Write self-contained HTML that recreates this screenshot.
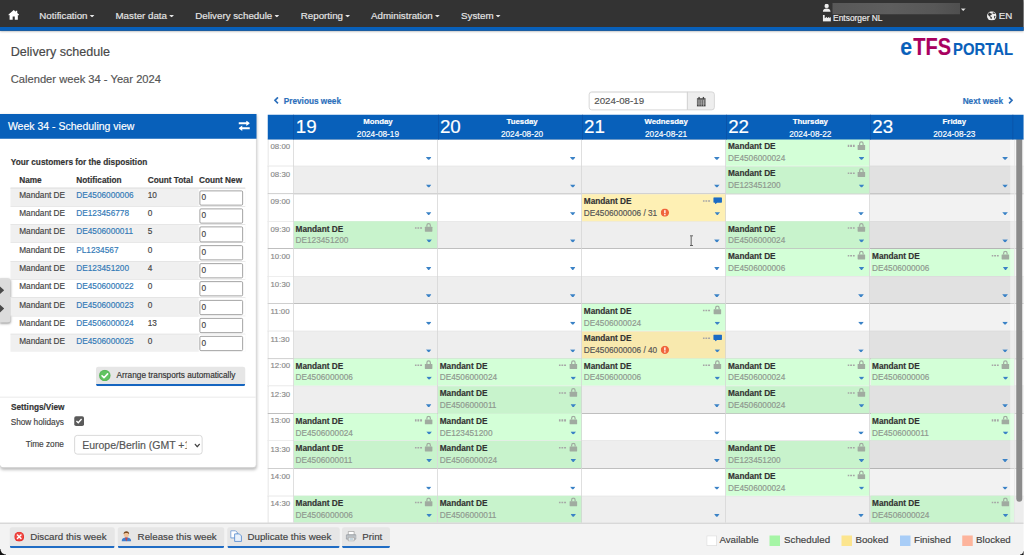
<!DOCTYPE html>
<html lang="en"><head><meta charset="utf-8"><title>Delivery schedule</title>
<style>
html,body{margin:0;padding:0;background:#fff;overflow:hidden;width:1024px;height:555px}
body{font-family:"Liberation Sans",sans-serif;font-size:11px;color:#444}
#s{position:absolute;left:0;top:0;width:1365.33px;height:740px;transform:scale(.75);transform-origin:0 0;overflow:hidden;background:#fff}
#s *{box-sizing:border-box;-webkit-text-stroke:.22px}
.abs{position:absolute}
/* navbar */
#nav{position:absolute;left:0;top:0;width:100%;height:41px;background:#333;border-bottom:5px solid #0860ba;box-shadow:0 1px 3px rgba(0,0,0,.35);z-index:9}
#nav .it{position:absolute;top:6px;line-height:30px;font-size:13px;color:#e6e6e6;white-space:nowrap}
#nav .car{display:inline-block;width:7px;height:3.7px;background:#e6e6e6;clip-path:polygon(0 0,100% 0,50% 100%);margin-left:2.6px;vertical-align:middle;position:relative;top:0px}
#nav svg{position:absolute}
#redact{position:absolute;left:1110.4px;top:4.1px;width:169.6px;height:15.4px;background:linear-gradient(90deg,#585858 0,#5e5e5e 45%,#575757 80%,#4f4f4f 100%)}
/* headings */
#h1{position:absolute;left:14.3px;top:57.6px;font-size:16.8px;line-height:24px;color:#484848;white-space:nowrap}
#h2{position:absolute;left:14.3px;top:94px;font-size:14.9px;line-height:22px;color:#555;white-space:nowrap}
#logo{position:absolute;right:14.6px;top:40px;height:44px;white-space:nowrap;font-weight:bold;transform-origin:100% 50%;transform:scaleX(.86);line-height:44px}
#logo .e{color:#0860ba;font-size:33px}
#logo .t{color:#a8005f;font-size:31px;letter-spacing:.1px;margin-left:1.6px}
#logo .p{color:#0860ba;font-size:23px;margin-left:3px}
/* left panel */
#lp{position:absolute;left:0;top:152px;width:341.7px;height:471.7px;background:#fff;border-right:1px solid #ddd;border-bottom:1px solid #ccc;border-radius:0 0 5px 5px;box-shadow:0 2px 4px rgba(0,0,0,.25)}
#lph{position:absolute;left:0;top:0;width:341.7px;height:33.3px;background:#0860ba;color:#fff;font-size:14px;line-height:33px;padding-left:10.5px;white-space:nowrap}
.b11{position:absolute;font-weight:bold;font-size:11px;line-height:14px;color:#333;white-space:nowrap}
.t11{position:absolute;font-size:11px;line-height:14px;color:#444;white-space:nowrap}
#ctab .tr{position:absolute;left:13.7px;width:313px;height:24.32px;border-top:1px solid #e2e2e2;font-size:11px;line-height:14px;color:#444}
#ctab .tr.a{background:#f0f0f0}
#ctab .tr span,#ctab .tr a{position:absolute;top:1.3px;white-space:nowrap}
#ctab .c1{left:11.9px}
#ctab .c2{left:88px;color:#337ab7}
#ctab .c3{left:183.3px}
#ctab .tr .inp{left:252.3px;top:2.2px;width:57.7px;height:20.2px;border:1px solid #858585;border-radius:2px;background:#fff;padding:1.2px 0 0 1.8px;font-size:11px;line-height:14px;color:#444}
#ctab .tr:after{content:"";position:absolute;left:251px;top:0;right:0;bottom:0;background:#fff;z-index:0}
#ctab .tr .inp{z-index:1}
.btn{position:absolute;background:#e6e6e6;border-bottom:3px solid #1565c0;border-radius:3px;color:#444;white-space:nowrap}
#tog{position:absolute;left:0;top:370.7px;width:14.4px;height:59px;background:#dcdcdc;border-radius:0 4px 4px 0;box-shadow:0 1px 3px rgba(0,0,0,.35);overflow:hidden}
/* toolbar */
.lnk{position:absolute;font-weight:bold;font-size:11px;line-height:14px;color:#2c6fbb;white-space:nowrap}
#din{position:absolute;left:784.8px;top:121.7px;width:132.5px;height:25.6px;border:1px solid #ccc;border-radius:4px 0 0 4px;background:#fff;font-size:13px;line-height:23px;padding-left:6.5px;color:#555;box-shadow:inset 0 1px 1px rgba(0,0,0,.075)}
#dad{position:absolute;left:916.3px;top:121.7px;width:37px;height:25.6px;border:1px solid #ccc;border-radius:0 4px 4px 0;background:#eee}
/* calendar */
#cal{position:absolute;left:0;top:0;width:1365.33px;height:697.2px;overflow:hidden;pointer-events:none}
.chead{position:absolute;left:357px;top:152.8px;width:1010px;height:33px;background:#0860ba;z-index:3}
.dh{position:absolute;top:152.8px;height:33px;color:#fff;border-left:1px solid #0a50a4;z-index:4;overflow:hidden}
.dh .dn{position:absolute;left:2.1px;top:0.6px;font-size:25px;line-height:30px}
.dh .dd{position:absolute;left:32px;right:0;top:-0.2px;text-align:center;font-size:11px;line-height:17.2px}
.dh .dd b{font-size:10.45px}
.row{position:absolute;left:357px;width:1010px;height:36.6px}
.row.r0{background:#fff;border-top:1px solid #aaa}
.row.r1{background:#eee;border-top:1px solid #e6e6e6}
.row .tm{position:absolute;left:0;top:0;width:34.5px;height:36.6px;font-size:10.45px;line-height:14px;color:#8a8a8a;padding:2.6px 0 0 2.7px;background:#fff;border-left:1px solid #ddd}
.row.r1 .tm{background:#fff;border-top:1px solid #e8e8e8;top:-1px;height:37.6px;padding-top:3.6px}
.dim{position:absolute;top:184.8px;height:513px;background:rgba(0,0,0,.05)}
.vl{position:absolute;top:184.8px;width:1px;height:512px;background:#d4d4d4}
.ev{position:absolute;height:36.1px;font-size:11px;line-height:14px;color:#333;padding:2.6px 0 0 2.2px;white-space:nowrap}
.ev.g{background:#d3ffd7}
.ev.g.o{background:#c8f3cc}
.ev.y{background:#fef0b4}
.ev.y.o{background:#f8e9ae}
.ev b{display:block;color:#333}
.ev .nm{display:block;color:#8f988f;margin-top:1.8px}
.ev.y .nm{color:#555}
.ev .ex{position:absolute;width:11px;height:11px;margin-left:4.5px;margin-top:1.5px}
.ev .dots{position:absolute;right:20.3px;top:8.1px;width:10px;height:2.2px;background:radial-gradient(circle at 1.1px 1.1px,#a6a6a6 1.1px,transparent 1.4px);background-size:3.6px 2.2px}
.ev .lk{position:absolute;right:6px;top:2.4px;width:11px;height:12.6px}
.ev .cm{position:absolute;right:5.2px;top:4.2px;width:11.6px;height:9.8px}
.ct{position:absolute;width:7.6px;height:4.2px;background:#3a82c6;clip-path:polygon(0 0,100% 0,58% 100%,42% 100%)}
.ev .ct{right:7.5px;top:24px}
.sb{position:absolute;left:1347px;top:184.8px;width:19px;height:513px;background:rgba(255,255,255,.4)}
.sb .th{position:absolute;left:8.2px;top:0;width:7.8px;height:484px;background:#8b8b8b;border-radius:0 0 4px 4px}
.ibeam{position:absolute;left:919.5px;top:314px;width:4px;height:14px;border-top:1.4px solid #333;border-bottom:1.4px solid #333}
.ibeam:after{content:"";position:absolute;left:1.3px;top:0;width:1.4px;height:100%;background:#333}
/* footer */
#ft{position:absolute;left:0;top:697.2px;width:100%;height:43px;background:#f3f3f3;border-top:1px solid #bdbdbd}
#ft .btn{top:4.4px;height:28.7px;font-size:13px;line-height:25px;border-bottom-color:#1f6cc4}
#ft .btn span{position:absolute;top:0}
#ft .btn svg{position:absolute}
.lg{position:absolute;top:15.8px;width:14px;height:14px}
.lt{position:absolute;top:12px;font-size:13px;line-height:20px;color:#444;white-space:nowrap}

.cbl{position:absolute;left:0;bottom:0;width:8px;height:8px;background:radial-gradient(circle at 100% 0,transparent 6.6px,#111 8px);z-index:20}
.cbr{position:absolute;right:0;bottom:0;width:5px;height:5px;background:radial-gradient(circle at 0 0,transparent 3.6px,#111 5px);z-index:20}

</style></head><body>
<div id="s">
<div id="nav">
<svg style="left:11px;top:13.3px;width:14.6px;height:13.4px" viewBox="0 0 14.6 13.4"><path d="M7.3 0.2 0 6.6l.9 1 .9-.8v6.4h4.1V9h2.8v4.2h4.1V6.8l.9.8.9-1L12 4.400V1.200h-1.900v1.500z" fill="#fff"/></svg>
<span class="it" style="left:52.4px">Notification<i class="car"></i></span>
<span class="it" style="left:154px">Master data<i class="car"></i></span>
<span class="it" style="left:260.4px">Delivery schedule<i class="car"></i></span>
<span class="it" style="left:401px">Reporting<i class="car"></i></span>
<span class="it" style="left:494.7px">Administration<i class="car"></i></span>
<span class="it" style="left:614.7px">System<i class="car"></i></span>
<svg style="left:1097.3px;top:5.3px;width:10.4px;height:10.8px" viewBox="0 0 10.4 10.8"><circle cx="5.2" cy="2.9" r="2.9" fill="#eee"/><path d="M0 10.800c0-3.200 2.200-4.600 5.200-4.600s5.200 1.400 5.200 4.600z" fill="#eee"/></svg>
<div id="redact"></div>
<i class="car" style="position:absolute;left:1280.8px;top:11px;margin:0"></i>
<svg style="left:1097.3px;top:20.4px;width:10.8px;height:8.8px" viewBox="0 0 10.8 8.8"><path d="M0 0h2.600v4.400L5.600 2.200v2.200L8.600 2.200v2.200L10.800 2.800V8.800H0z" fill="#eee"/></svg>
<span class="it" style="left:1110.8px;top:17.2px;font-size:11.2px;line-height:14px;color:#eee">Entsorger NL</span>
<svg style="left:1316px;top:14.7px;width:12.6px;height:12.6px" viewBox="0 0 12.6 12.6"><circle cx="6.3" cy="6.3" r="6.3" fill="#eee"/><path d="M3.200 1.600c1 .3 1.200 1.200 2.300 1.300 1 .1 1.500.7 1 1.500-.6.800-1.800.6-2.200 1.500-.3.900.9 1.300 1.700 1.700.8.400.5 1.500.1 2.300-.4.800-1.200.3-1.500-.6-.3-.9-.1-1.600-.9-2.200C2.900 6.500 1.800 5.900 1.400 4.800 1.300 3.500 2.100 2.200 3.200 1.600zM8.600 1.200c.9.500 1.800 1.300 2.300 2.300-.7.300-1.100-.2-1.700-.3-.7-.1-1 .5-1.600.1-.5-.4 0-1.100.3-1.500.2-.3.400-.5.700-.6zM10.300 6c.5.200.9.600 1 1.100-.3 1.200-1 2.200-1.900 2.900-.3-.7.300-1.300.1-2.100-.2-.7.200-1.700.8-1.900z" fill="#333"/></svg>
<span class="it" style="left:1331.6px">EN</span>
</div>
<div id="h1">Delivery schedule</div>
<div id="h2">Calender week 34 - Year 2024</div>
<div id="logo"><span class="e">e</span><span class="t">TFS</span><span class="p">PORTAL</span></div>

<div id="lp">
<div id="lph">Week 34 - Scheduling view
<svg class="abs" style="left:318px;top:9.2px;width:15.4px;height:13.4px" viewBox="0 0 15.4 13.4"><path d="M0 2.100h10.400V-.3l5 3.600-5 3.600V4.700H0zM15.400 8.800H5V6.400L0 10l5 3.600v-2.200h10.400z" fill="#fff"/></svg>
</div>
</div>
<div class="b11" style="left:14.4px;top:209px">Your customers for the disposition</div>
<div class="b11" style="left:25.6px;top:233.2px">Name</div>
<div class="b11" style="left:101.7px;top:233.2px">Notification</div>
<div class="b11" style="left:197px;top:233.2px">Count Total</div>
<div class="b11" style="left:265.3px;top:233.2px">Count New</div>
<div class="abs" style="left:13.7px;top:249.6px;width:313px;height:1.5px;background:#ddd"></div>
<div id="tog"><svg class="abs" style="left:0;top:0;width:14.4px;height:59px" viewBox="0 0 14.4 59"><path d="M-1 10L5.6 16L-1 22L-3.8 19.3L-.2 16L-3.8 12.7ZM-1 34.5L5.6 40.5L-1 46.5L-3.8 43.8L-.2 40.5L-3.8 37.2Z" fill="#4a4a4a"/></svg></div>

<div class="btn" style="left:127.7px;top:489.3px;width:199.3px;height:25.7px;font-size:11px;line-height:23px;color:#333">
<svg class="abs" style="left:4.7px;top:3.8px;width:15.4px;height:15.4px" viewBox="0 0 16 16"><circle cx="8" cy="8" r="8" fill="#5cb85c"/><circle cx="8" cy="8" r="6.300" fill="#62c462"/><path d="M4.200 8.300 6.900 11l5-5.300" fill="none" stroke="#fff" stroke-width="2.200" stroke-linecap="round" stroke-linejoin="round"/></svg>
<span class="abs" style="left:27.8px;top:0">Arrange transports automatically</span></div>
<div class="abs" style="left:0;top:529.2px;width:341px;height:1px;background:#e3e3e3"></div>
<div class="b11" style="left:14.7px;top:535.9px">Settings/View</div>
<div class="t11" style="left:0;width:85.2px;text-align:right;top:555.2px">Show holidays</div>
<div class="abs" style="left:99px;top:555px;width:12.6px;height:12.6px;background:#5a5a5a;border-radius:2.4px"><svg class="abs" style="left:0;top:0;width:12.6px;height:12.6px" viewBox="0 0 13 13"><path d="M3 6.600 5.500 9l4.600-5.200" fill="none" stroke="#fff" stroke-width="1.900"/></svg></div>
<div class="t11" style="left:0;width:85.2px;text-align:right;top:585.1px">Time zone</div>
<div class="abs" style="left:99px;top:580.4px;width:171px;height:25.8px;border:1px solid #ccc;border-radius:4px;background:#fff;font-size:14px;line-height:24px;padding-left:9.6px;color:#555;white-space:nowrap;overflow:hidden"><span style="display:inline-block;width:139px;overflow:hidden;height:24px">Europe/Berlin (GMT +1)</span>
<svg class="abs" style="left:158.6px;top:9.4px;width:8px;height:6px" viewBox="0 0 8 6"><path d="M.7.9 4 4.600 7.300.9" fill="none" stroke="#444" stroke-width="1.700"/></svg></div>

<svg class="abs" style="left:365.4px;top:129.3px;width:7px;height:9.6px" viewBox="0 0 7 9.600"><path d="M5.600.8 1.600 4.800l4 4" fill="none" stroke="#2c6fbb" stroke-width="2.200"/></svg>
<div class="lnk" style="left:378.3px;top:127.7px">Previous week</div>
<div id="din">2024-08-19</div>
<div id="dad"><svg class="abs" style="left:12px;top:6.200px;width:12px;height:13.2px" viewBox="0 0 12 13.200"><path d="M0 2h12v11.200H0z" fill="#444"/><path d="M2.200 0h1.800v3H2.200zM8 0h1.800v3H8z" fill="#444"/><path d="M0 4.400h12M0 7h12M0 9.600h12" stroke="#eee" stroke-width=".7"/><path d="M3 4.400v8.800M6 4.400v8.800M9 4.400v8.800" stroke="#eee" stroke-width=".6"/></svg></div>
<div class="lnk" style="left:1283.5px;top:127.5px">Next week</div>
<svg class="abs" style="left:1344.2px;top:129px;width:7px;height:9.6px" viewBox="0 0 7 9.600"><path d="M1.400.8 5.400 4.800l-4 4" fill="none" stroke="#2c6fbb" stroke-width="2.200"/></svg>
<div id="cal">
<div class="chead"></div>
<div class="dh" style="left:391.3px;width:192.2px"><span class="dn">19</span><span class="dd"><b>Monday</b><br>2024-08-19</span></div>
<div class="dh" style="left:583.5px;width:192.1px"><span class="dn">20</span><span class="dd"><b>Tuesday</b><br>2024-08-20</span></div>
<div class="dh" style="left:775.6px;width:192.1px"><span class="dn">21</span><span class="dd"><b>Wednesday</b><br>2024-08-21</span></div>
<div class="dh" style="left:967.8px;width:192.2px"><span class="dn">22</span><span class="dd"><b>Thursday</b><br>2024-08-22</span></div>
<div class="dh" style="left:1159.9px;width:192.1px"><span class="dn">23</span><span class="dd"><b>Friday</b><br>2024-08-23</span></div>
<div class="row r0" style="top:184.8px"><span class="tm">08:00</span></div>
<div class="row r1" style="top:221.4px"><span class="tm">08:30</span></div>
<div class="row r0" style="top:258.0px"><span class="tm">09:00</span></div>
<div class="row r1" style="top:294.6px"><span class="tm">09:30</span></div>
<div class="row r0" style="top:331.2px"><span class="tm">10:00</span></div>
<div class="row r1" style="top:367.8px"><span class="tm">10:30</span></div>
<div class="row r0" style="top:404.4px"><span class="tm">11:00</span></div>
<div class="row r1" style="top:441.0px"><span class="tm">11:30</span></div>
<div class="row r0" style="top:477.6px"><span class="tm">12:00</span></div>
<div class="row r1" style="top:514.2px"><span class="tm">12:30</span></div>
<div class="row r0" style="top:550.8px"><span class="tm">13:00</span></div>
<div class="row r1" style="top:587.4px"><span class="tm">13:30</span></div>
<div class="row r0" style="top:624.0px"><span class="tm">14:00</span></div>
<div class="row r1" style="top:660.6px"><span class="tm">14:30</span></div>
<div class="dim" style="left:1159.9px;width:206.1px"></div>
<i class="ct" style="left:567.8px;top:209.3px"></i>
<i class="ct" style="left:567.8px;top:245.9px"></i>
<i class="ct" style="left:567.8px;top:282.5px"></i>
<div class="ev g o" style="left:391.9px;top:295.1px;width:191.6px"><b>Mandant DE</b><span class="nm">DE123451200</span><i class="dots"></i><svg class="lk" viewBox="0 0 11 12"><path d="M2.4 5V3.3a3.1 3.1 0 0 1 6.2 0V5h-1.6V3.3a1.5 1.5 0 0 0-3 0V5z" fill="#a0aba0"/><rect x="0.3" y="5" width="10.4" height="6.6" rx="0.8" fill="#a0aba0"/></svg><i class="ct"></i></div>
<i class="ct" style="left:567.8px;top:355.7px"></i>
<i class="ct" style="left:567.8px;top:392.3px"></i>
<i class="ct" style="left:567.8px;top:428.9px"></i>
<i class="ct" style="left:567.8px;top:465.5px"></i>
<div class="ev g" style="left:391.9px;top:478.1px;width:191.6px"><b>Mandant DE</b><span class="nm">DE4506000006</span><i class="dots"></i><svg class="lk" viewBox="0 0 11 12"><path d="M2.4 5V3.3a3.1 3.1 0 0 1 6.2 0V5h-1.6V3.3a1.5 1.5 0 0 0-3 0V5z" fill="#a0aba0"/><rect x="0.3" y="5" width="10.4" height="6.6" rx="0.8" fill="#a0aba0"/></svg><i class="ct"></i></div>
<i class="ct" style="left:567.8px;top:538.7px"></i>
<div class="ev g" style="left:391.9px;top:551.3px;width:191.6px"><b>Mandant DE</b><span class="nm">DE4506000024</span><i class="dots"></i><svg class="lk" viewBox="0 0 11 12"><path d="M2.4 5V3.3a3.1 3.1 0 0 1 6.2 0V5h-1.6V3.3a1.5 1.5 0 0 0-3 0V5z" fill="#a0aba0"/><rect x="0.3" y="5" width="10.4" height="6.6" rx="0.8" fill="#a0aba0"/></svg><i class="ct"></i></div>
<div class="ev g o" style="left:391.9px;top:587.9px;width:191.6px"><b>Mandant DE</b><span class="nm">DE4506000011</span><i class="dots"></i><svg class="lk" viewBox="0 0 11 12"><path d="M2.4 5V3.3a3.1 3.1 0 0 1 6.2 0V5h-1.6V3.3a1.5 1.5 0 0 0-3 0V5z" fill="#a0aba0"/><rect x="0.3" y="5" width="10.4" height="6.6" rx="0.8" fill="#a0aba0"/></svg><i class="ct"></i></div>
<i class="ct" style="left:567.8px;top:648.5px"></i>
<div class="ev g o" style="left:391.9px;top:661.1px;width:191.6px"><b>Mandant DE</b><span class="nm">DE4506000006</span><i class="dots"></i><svg class="lk" viewBox="0 0 11 12"><path d="M2.4 5V3.3a3.1 3.1 0 0 1 6.2 0V5h-1.6V3.3a1.5 1.5 0 0 0-3 0V5z" fill="#a0aba0"/><rect x="0.3" y="5" width="10.4" height="6.6" rx="0.8" fill="#a0aba0"/></svg><i class="ct"></i></div>
<i class="ct" style="left:759.9px;top:209.3px"></i>
<i class="ct" style="left:759.9px;top:245.9px"></i>
<i class="ct" style="left:759.9px;top:282.5px"></i>
<i class="ct" style="left:759.9px;top:319.1px"></i>
<i class="ct" style="left:759.9px;top:355.7px"></i>
<i class="ct" style="left:759.9px;top:392.3px"></i>
<i class="ct" style="left:759.9px;top:428.9px"></i>
<i class="ct" style="left:759.9px;top:465.5px"></i>
<div class="ev g" style="left:584.1px;top:478.1px;width:191.5px"><b>Mandant DE</b><span class="nm">DE4506000024</span><i class="dots"></i><svg class="lk" viewBox="0 0 11 12"><path d="M2.4 5V3.3a3.1 3.1 0 0 1 6.2 0V5h-1.6V3.3a1.5 1.5 0 0 0-3 0V5z" fill="#a0aba0"/><rect x="0.3" y="5" width="10.4" height="6.6" rx="0.8" fill="#a0aba0"/></svg><i class="ct"></i></div>
<div class="ev g o" style="left:584.1px;top:514.7px;width:191.5px"><b>Mandant DE</b><span class="nm">DE4506000011</span><i class="dots"></i><svg class="lk" viewBox="0 0 11 12"><path d="M2.4 5V3.3a3.1 3.1 0 0 1 6.2 0V5h-1.6V3.3a1.5 1.5 0 0 0-3 0V5z" fill="#a0aba0"/><rect x="0.3" y="5" width="10.4" height="6.6" rx="0.8" fill="#a0aba0"/></svg><i class="ct"></i></div>
<div class="ev g" style="left:584.1px;top:551.3px;width:191.5px"><b>Mandant DE</b><span class="nm">DE123451200</span><i class="dots"></i><svg class="lk" viewBox="0 0 11 12"><path d="M2.4 5V3.3a3.1 3.1 0 0 1 6.2 0V5h-1.6V3.3a1.5 1.5 0 0 0-3 0V5z" fill="#a0aba0"/><rect x="0.3" y="5" width="10.4" height="6.6" rx="0.8" fill="#a0aba0"/></svg><i class="ct"></i></div>
<div class="ev g o" style="left:584.1px;top:587.9px;width:191.5px"><b>Mandant DE</b><span class="nm">DE4506000024</span><i class="dots"></i><svg class="lk" viewBox="0 0 11 12"><path d="M2.4 5V3.3a3.1 3.1 0 0 1 6.2 0V5h-1.6V3.3a1.5 1.5 0 0 0-3 0V5z" fill="#a0aba0"/><rect x="0.3" y="5" width="10.4" height="6.6" rx="0.8" fill="#a0aba0"/></svg><i class="ct"></i></div>
<i class="ct" style="left:759.9px;top:648.5px"></i>
<div class="ev g o" style="left:584.1px;top:661.1px;width:191.5px"><b>Mandant DE</b><span class="nm">DE4506000011</span><i class="dots"></i><svg class="lk" viewBox="0 0 11 12"><path d="M2.4 5V3.3a3.1 3.1 0 0 1 6.2 0V5h-1.6V3.3a1.5 1.5 0 0 0-3 0V5z" fill="#a0aba0"/><rect x="0.3" y="5" width="10.4" height="6.6" rx="0.8" fill="#a0aba0"/></svg><i class="ct"></i></div>
<i class="ct" style="left:952.0px;top:209.3px"></i>
<i class="ct" style="left:952.0px;top:245.9px"></i>
<div class="ev y" style="left:776.2px;top:258.5px;width:191.5px"><b>Mandant DE</b><span class="nm">DE4506000006 / 31<svg class="ex" viewBox="0 0 12 12"><circle cx="6" cy="6" r="6" fill="#f0643c"/><rect x="5" y="2.4" width="2" height="4.6" fill="#fff"/><rect x="5" y="8" width="2" height="1.9" fill="#fff"/></svg></span><i class="dots"></i><svg class="cm" viewBox="0 0 12 10"><path d="M1 0h10a1 1 0 0 1 1 1v5.5a1 1 0 0 1-1 1H5.2L2.6 10V7.5H1a1 1 0 0 1-1-1V1a1 1 0 0 1 1-1z" fill="#1c6bc4"/></svg><i class="ct"></i></div>
<i class="ct" style="left:952.0px;top:319.1px"></i>
<i class="ct" style="left:952.0px;top:355.7px"></i>
<i class="ct" style="left:952.0px;top:392.3px"></i>
<div class="ev g" style="left:776.2px;top:404.9px;width:191.5px"><b>Mandant DE</b><span class="nm">DE4506000024</span><i class="dots"></i><svg class="lk" viewBox="0 0 11 12"><path d="M2.4 5V3.3a3.1 3.1 0 0 1 6.2 0V5h-1.6V3.3a1.5 1.5 0 0 0-3 0V5z" fill="#a0aba0"/><rect x="0.3" y="5" width="10.4" height="6.6" rx="0.8" fill="#a0aba0"/></svg><i class="ct"></i></div>
<div class="ev y o" style="left:776.2px;top:441.5px;width:191.5px"><b>Mandant DE</b><span class="nm">DE4506000006 / 40<svg class="ex" viewBox="0 0 12 12"><circle cx="6" cy="6" r="6" fill="#f0643c"/><rect x="5" y="2.4" width="2" height="4.6" fill="#fff"/><rect x="5" y="8" width="2" height="1.9" fill="#fff"/></svg></span><i class="dots"></i><svg class="cm" viewBox="0 0 12 10"><path d="M1 0h10a1 1 0 0 1 1 1v5.5a1 1 0 0 1-1 1H5.2L2.6 10V7.5H1a1 1 0 0 1-1-1V1a1 1 0 0 1 1-1z" fill="#1c6bc4"/></svg><i class="ct"></i></div>
<div class="ev g" style="left:776.2px;top:478.1px;width:191.5px"><b>Mandant DE</b><span class="nm">DE4506000006</span><i class="dots"></i><svg class="lk" viewBox="0 0 11 12"><path d="M2.4 5V3.3a3.1 3.1 0 0 1 6.2 0V5h-1.6V3.3a1.5 1.5 0 0 0-3 0V5z" fill="#a0aba0"/><rect x="0.3" y="5" width="10.4" height="6.6" rx="0.8" fill="#a0aba0"/></svg><i class="ct"></i></div>
<i class="ct" style="left:952.0px;top:538.7px"></i>
<i class="ct" style="left:952.0px;top:575.3px"></i>
<i class="ct" style="left:952.0px;top:611.9px"></i>
<i class="ct" style="left:952.0px;top:648.5px"></i>
<i class="ct" style="left:952.0px;top:685.1px"></i>
<div class="ev g" style="left:968.4px;top:185.3px;width:191.6px"><b>Mandant DE</b><span class="nm">DE4506000024</span><i class="dots"></i><svg class="lk" viewBox="0 0 11 12"><path d="M2.4 5V3.3a3.1 3.1 0 0 1 6.2 0V5h-1.6V3.3a1.5 1.5 0 0 0-3 0V5z" fill="#a0aba0"/><rect x="0.3" y="5" width="10.4" height="6.6" rx="0.8" fill="#a0aba0"/></svg><i class="ct"></i></div>
<div class="ev g o" style="left:968.4px;top:221.9px;width:191.6px"><b>Mandant DE</b><span class="nm">DE123451200</span><i class="dots"></i><svg class="lk" viewBox="0 0 11 12"><path d="M2.4 5V3.3a3.1 3.1 0 0 1 6.2 0V5h-1.6V3.3a1.5 1.5 0 0 0-3 0V5z" fill="#a0aba0"/><rect x="0.3" y="5" width="10.4" height="6.6" rx="0.8" fill="#a0aba0"/></svg><i class="ct"></i></div>
<i class="ct" style="left:1144.2px;top:282.5px"></i>
<div class="ev g o" style="left:968.4px;top:295.1px;width:191.6px"><b>Mandant DE</b><span class="nm">DE4506000024</span><i class="dots"></i><svg class="lk" viewBox="0 0 11 12"><path d="M2.4 5V3.3a3.1 3.1 0 0 1 6.2 0V5h-1.6V3.3a1.5 1.5 0 0 0-3 0V5z" fill="#a0aba0"/><rect x="0.3" y="5" width="10.4" height="6.6" rx="0.8" fill="#a0aba0"/></svg><i class="ct"></i></div>
<div class="ev g" style="left:968.4px;top:331.7px;width:191.6px"><b>Mandant DE</b><span class="nm">DE4506000006</span><i class="dots"></i><svg class="lk" viewBox="0 0 11 12"><path d="M2.4 5V3.3a3.1 3.1 0 0 1 6.2 0V5h-1.6V3.3a1.5 1.5 0 0 0-3 0V5z" fill="#a0aba0"/><rect x="0.3" y="5" width="10.4" height="6.6" rx="0.8" fill="#a0aba0"/></svg><i class="ct"></i></div>
<i class="ct" style="left:1144.2px;top:392.3px"></i>
<i class="ct" style="left:1144.2px;top:428.9px"></i>
<i class="ct" style="left:1144.2px;top:465.5px"></i>
<div class="ev g" style="left:968.4px;top:478.1px;width:191.6px"><b>Mandant DE</b><span class="nm">DE4506000024</span><i class="dots"></i><svg class="lk" viewBox="0 0 11 12"><path d="M2.4 5V3.3a3.1 3.1 0 0 1 6.2 0V5h-1.6V3.3a1.5 1.5 0 0 0-3 0V5z" fill="#a0aba0"/><rect x="0.3" y="5" width="10.4" height="6.6" rx="0.8" fill="#a0aba0"/></svg><i class="ct"></i></div>
<div class="ev g o" style="left:968.4px;top:514.7px;width:191.6px"><b>Mandant DE</b><span class="nm">DE4506000024</span><i class="dots"></i><svg class="lk" viewBox="0 0 11 12"><path d="M2.4 5V3.3a3.1 3.1 0 0 1 6.2 0V5h-1.6V3.3a1.5 1.5 0 0 0-3 0V5z" fill="#a0aba0"/><rect x="0.3" y="5" width="10.4" height="6.6" rx="0.8" fill="#a0aba0"/></svg><i class="ct"></i></div>
<i class="ct" style="left:1144.2px;top:575.3px"></i>
<div class="ev g o" style="left:968.4px;top:587.9px;width:191.6px"><b>Mandant DE</b><span class="nm">DE123451200</span><i class="dots"></i><svg class="lk" viewBox="0 0 11 12"><path d="M2.4 5V3.3a3.1 3.1 0 0 1 6.2 0V5h-1.6V3.3a1.5 1.5 0 0 0-3 0V5z" fill="#a0aba0"/><rect x="0.3" y="5" width="10.4" height="6.6" rx="0.8" fill="#a0aba0"/></svg><i class="ct"></i></div>
<div class="ev g" style="left:968.4px;top:624.5px;width:191.6px"><b>Mandant DE</b><span class="nm">DE4506000024</span><i class="dots"></i><svg class="lk" viewBox="0 0 11 12"><path d="M2.4 5V3.3a3.1 3.1 0 0 1 6.2 0V5h-1.6V3.3a1.5 1.5 0 0 0-3 0V5z" fill="#a0aba0"/><rect x="0.3" y="5" width="10.4" height="6.6" rx="0.8" fill="#a0aba0"/></svg><i class="ct"></i></div>
<i class="ct" style="left:1144.2px;top:685.1px"></i>
<i class="ct" style="left:1336.3px;top:209.3px"></i>
<i class="ct" style="left:1336.3px;top:245.9px"></i>
<i class="ct" style="left:1336.3px;top:282.5px"></i>
<i class="ct" style="left:1336.3px;top:319.1px"></i>
<div class="ev g" style="left:1160.5px;top:331.7px;width:191.5px"><b>Mandant DE</b><span class="nm">DE4506000006</span><i class="dots"></i><svg class="lk" viewBox="0 0 11 12"><path d="M2.4 5V3.3a3.1 3.1 0 0 1 6.2 0V5h-1.6V3.3a1.5 1.5 0 0 0-3 0V5z" fill="#a0aba0"/><rect x="0.3" y="5" width="10.4" height="6.6" rx="0.8" fill="#a0aba0"/></svg><i class="ct"></i></div>
<i class="ct" style="left:1336.3px;top:392.3px"></i>
<i class="ct" style="left:1336.3px;top:428.9px"></i>
<i class="ct" style="left:1336.3px;top:465.5px"></i>
<div class="ev g" style="left:1160.5px;top:478.1px;width:191.5px"><b>Mandant DE</b><span class="nm">DE4506000006</span><i class="dots"></i><svg class="lk" viewBox="0 0 11 12"><path d="M2.4 5V3.3a3.1 3.1 0 0 1 6.2 0V5h-1.6V3.3a1.5 1.5 0 0 0-3 0V5z" fill="#a0aba0"/><rect x="0.3" y="5" width="10.4" height="6.6" rx="0.8" fill="#a0aba0"/></svg><i class="ct"></i></div>
<i class="ct" style="left:1336.3px;top:538.7px"></i>
<div class="ev g" style="left:1160.5px;top:551.3px;width:191.5px"><b>Mandant DE</b><span class="nm">DE4506000011</span><i class="dots"></i><svg class="lk" viewBox="0 0 11 12"><path d="M2.4 5V3.3a3.1 3.1 0 0 1 6.2 0V5h-1.6V3.3a1.5 1.5 0 0 0-3 0V5z" fill="#a0aba0"/><rect x="0.3" y="5" width="10.4" height="6.6" rx="0.8" fill="#a0aba0"/></svg><i class="ct"></i></div>
<i class="ct" style="left:1336.3px;top:611.9px"></i>
<i class="ct" style="left:1336.3px;top:648.5px"></i>
<div class="ev g o" style="left:1160.5px;top:661.1px;width:191.5px"><b>Mandant DE</b><span class="nm">DE4506000024</span><i class="dots"></i><svg class="lk" viewBox="0 0 11 12"><path d="M2.4 5V3.3a3.1 3.1 0 0 1 6.2 0V5h-1.6V3.3a1.5 1.5 0 0 0-3 0V5z" fill="#a0aba0"/><rect x="0.3" y="5" width="10.4" height="6.6" rx="0.8" fill="#a0aba0"/></svg><i class="ct"></i></div>
<div class="vl" style="left:390.8px"></div>
<div class="vl" style="left:583.0px"></div>
<div class="vl" style="left:775.1px"></div>
<div class="vl" style="left:967.2px"></div>
<div class="vl" style="left:1159.4px"></div>
<div class="vl" style="left:1351.5px"></div>
<div class="dh" style="left:1350px;width:16px"></div>
<div class="sb"><div class="th"></div></div>
<div class="ibeam"></div>
</div>
<div id="ctab">
<div class="tr a" style="top:250.50px"><span class="c1">Mandant DE</span><a class="c2">DE4506000006</a><span class="c3">10</span><span class="inp">0</span></div>
<div class="tr" style="top:274.82px"><span class="c1">Mandant DE</span><a class="c2">DE123456778</a><span class="c3">0</span><span class="inp">0</span></div>
<div class="tr a" style="top:299.14px"><span class="c1">Mandant DE</span><a class="c2">DE4506000011</a><span class="c3">5</span><span class="inp">0</span></div>
<div class="tr" style="top:323.46px"><span class="c1">Mandant DE</span><a class="c2">PL1234567</a><span class="c3">0</span><span class="inp">0</span></div>
<div class="tr a" style="top:347.78px"><span class="c1">Mandant DE</span><a class="c2">DE123451200</a><span class="c3">4</span><span class="inp">0</span></div>
<div class="tr" style="top:372.10px"><span class="c1">Mandant DE</span><a class="c2">DE4506000022</a><span class="c3">0</span><span class="inp">0</span></div>
<div class="tr a" style="top:396.42px"><span class="c1">Mandant DE</span><a class="c2">DE4506000023</a><span class="c3">0</span><span class="inp">0</span></div>
<div class="tr" style="top:420.74px"><span class="c1">Mandant DE</span><a class="c2">DE4506000024</a><span class="c3">13</span><span class="inp">0</span></div>
<div class="tr a" style="top:445.06px"><span class="c1">Mandant DE</span><a class="c2">DE4506000025</a><span class="c3">0</span><span class="inp">0</span></div>
</div>
<div id="ft">
<div class="btn" style="left:13px;width:140px">
<svg style="left:5.6px;top:6.2px;width:13.2px;height:13.2px" viewBox="0 0 14 14"><circle cx="7" cy="7" r="7" fill="#e8312f"/><circle cx="7" cy="6.500" r="5.500" fill="#f04a44"/><path d="M4.500 4.500l5 5M9.500 4.500l-5 5" stroke="#fff" stroke-width="2.100" stroke-linecap="round"/></svg>
<span style="left:27.2px">Discard this week</span></div>
<div class="btn" style="left:156.7px;width:142.6px">
<svg style="left:5.4px;top:5.6px;width:13px;height:14px" viewBox="0 0 13 14"><path d="M0 14c0-3.600 2-5.300 6.500-5.300S13 10.400 13 14z" fill="#3f7fcf"/><path d="M4.600 8.700h3.800L6.500 14z" fill="#c44"/><circle cx="6.500" cy="4.600" r="3.500" fill="#f2c49a"/><path d="M2.800 4.400C2.600 1.500 4.300.3 6.500.3s3.900 1.200 3.700 4.100C9.300 3.300 8 2.700 6.500 2.700S3.700 3.300 2.800 4.400z" fill="#7a4a22"/></svg>
<span style="left:26.8px">Release this week</span></div>
<div class="btn" style="left:303.3px;width:149.7px">
<svg style="left:4px;top:4.800px;width:15.600px;height:15.600px" viewBox="0 0 16 16"><path d="M.7.700h6.500l2.300 2.300v7.500H.7z" fill="#fff" stroke="#5b8fd0" stroke-width="1.200"/><path d="M6 5h6.500l2.800 2.800v7.500H6z" fill="#e8f1fb" stroke="#5b8fd0" stroke-width="1.200"/></svg>
<span style="left:26.6px">Duplicate this week</span></div>
<div class="btn" style="left:456.4px;width:63.6px">
<svg style="left:4.200px;top:5.400px;width:14.600px;height:14px" viewBox="0 0 15 14"><path d="M3.500.5h8v5h-8z" fill="#fff" stroke="#999" stroke-width=".9"/><rect x=".5" y="5" width="14" height="6" rx="1" fill="#bfc4c9" stroke="#8a8f94" stroke-width=".9"/><path d="M3.500 8.500h8v5h-8z" fill="#fff" stroke="#999" stroke-width=".9"/><path d="M5 10.300h5M5 11.800h5" stroke="#8ab" stroke-width=".8"/></svg>
<span style="left:26.600px">Print</span></div>
<div class="lg" style="left:941.7px;background:#fff;border:1px solid #ddd"></div><div class="lt" style="left:959.2px">Available</div>
<div class="lg" style="left:1026.4px;background:#a6f5a6"></div><div class="lt" style="left:1045.4px">Scheduled</div>
<div class="lg" style="left:1122px;background:#fce58e"></div><div class="lt" style="left:1140.6px">Booked</div>
<div class="lg" style="left:1200px;background:#a8cdf7"></div><div class="lt" style="left:1218.600px">Finished</div>
<div class="lg" style="left:1282.600px;background:#fdb49c"></div><div class="lt" style="left:1301.400px">Blocked</div>
</div>
<div class="cbl"></div><div class="cbr"></div>
</div>
</body></html>
